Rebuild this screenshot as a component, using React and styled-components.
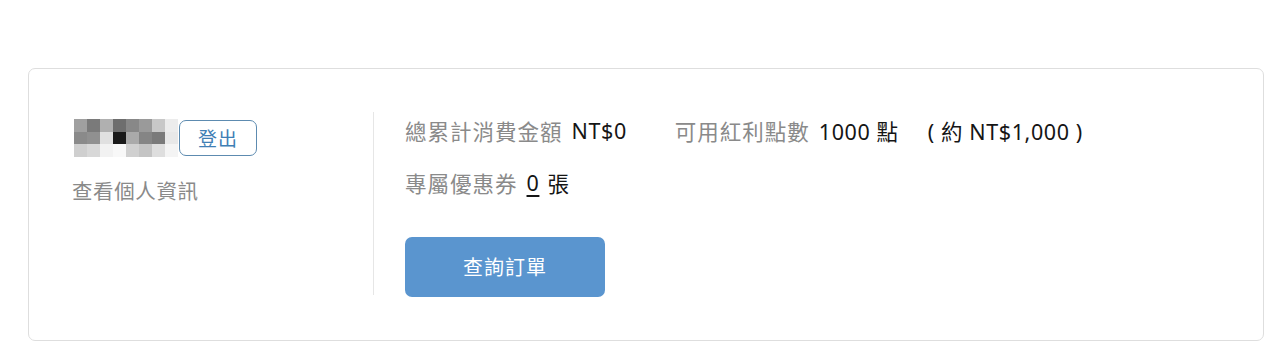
import React from 'react';
import styled, { createGlobalStyle } from 'styled-components';

const GlobalStyle = createGlobalStyle`
  body {
    margin: 0;
    background: #fff;
    font-family: "Noto Sans", "Noto Sans CJK TC", sans-serif;
  }
`;

const Page = styled.div`
  padding: 68px 14px 0 28px;
`;

const Card = styled.div`
  display: flex;
  border: 1px solid #dedede;
  border-radius: 7px;
  padding: 43px 0 43px 45px;
  height: 273px;
  box-sizing: border-box;
`;

const Profile = styled.div`
  width: 300px;
  padding-top: 7px;
`;

const NameRow = styled.div`
  display: flex;
  align-items: center;
`;

const Mosaic = styled.div`
  display: grid;
  grid-template-columns: repeat(8, 13px);
  grid-auto-rows: 12.5px;
`;

const Cell = styled.div`
  background: ${(p) => p.$c};
`;

const LogoutButton = styled.button`
  width: 78px;
  height: 36px;
  margin-left: 1px;
  border: 1px solid #5d8bb0;
  border-radius: 7px;
  background: #fff;
  color: #3f7fb5;
  font-family: inherit;
  font-size: 19px;
  letter-spacing: 1px;
  padding: 0;
  cursor: pointer;
`;

const ProfileLink = styled.div`
  margin-top: 20px;
  margin-left: -2px;
  font-size: 20.5px;
  letter-spacing: 0.6px;
  color: #8a8a8a;
  line-height: 28px;
`;

const Divider = styled.div`
  width: 1px;
  height: 183px;
  background: #e6e6e6;
  margin-left: -1px;
`;

const Summary = styled.div`
  padding-left: 31px;
  display: flex;
  flex-direction: column;
  align-items: flex-start;
`;

const InfoRow = styled.div`
  display: flex;
  align-items: center;
  height: 38px;
  font-size: 21.5px;
  letter-spacing: 1px;
  & + & {
    margin-top: 14px;
  }
`;

const Item = styled.span`
  display: inline-flex;
  align-items: center;
  margin-left: ${(p) => p.$gap || 0}px;
`;

const Label = styled.span`
  color: #8a8a8a;
  margin-right: 9px;
`;

const Value = styled.span`
  color: #151515;
  letter-spacing: 0.6px;
  text-decoration: ${(p) => (p.$underline ? 'underline' : 'none')};
  text-underline-offset: 4px;
  margin-right: ${(p) => p.$mr || 0}px;
`;

const OrderButton = styled.button`
  margin-top: 36px;
  width: 200px;
  height: 61px;
  border: none;
  border-radius: 7px;
  background: #5a95cf;
  color: #fff;
  font-family: inherit;
  font-size: 20px;
  letter-spacing: 1px;
  cursor: pointer;
`;

const mosaic = [
  '#a0a0a0', '#7a7a7a', '#b0b0b0', '#6e6e6e', '#888888', '#9a9a9a', '#c8c8c8', '#ececec',
  '#8a8a8a', '#909090', '#e0e0e0', '#1a1a1a', '#aaaaaa', '#858585', '#7a7a7a', '#e8e8e8',
  '#cfcfcf', '#d8d8d8', '#f2f2f2', '#f8f8f8', '#d0d0d0', '#c4c4c4', '#dedede', '#f4f4f4',
];

const App = () => {
  return (
    <Page>
      <GlobalStyle />
      <Card>
        <Profile>
          <NameRow>
            <Mosaic>
              {mosaic.map((c, i) => (
                <Cell key={i} $c={c} />
              ))}
            </Mosaic>
            <LogoutButton>登出</LogoutButton>
          </NameRow>
          <ProfileLink>查看個人資訊</ProfileLink>
        </Profile>

        <Divider />

        <Summary>
          <InfoRow>
            <Item>
              <Label>總累計消費金額</Label>
              <Value>NT$0</Value>
            </Item>
            <Item $gap={48}>
              <Label>可用紅利點數</Label>
              <Value $mr={29}>1000 點</Value>
              <Value>( 約 NT$1,000 )</Value>
            </Item>
          </InfoRow>
          <InfoRow>
            <Label>專屬優惠券</Label>
            <Value $underline $mr={8}>0</Value>
            <Value>張</Value>
          </InfoRow>
          <OrderButton>查詢訂單</OrderButton>
        </Summary>
      </Card>
    </Page>
  );
};

export default App;
